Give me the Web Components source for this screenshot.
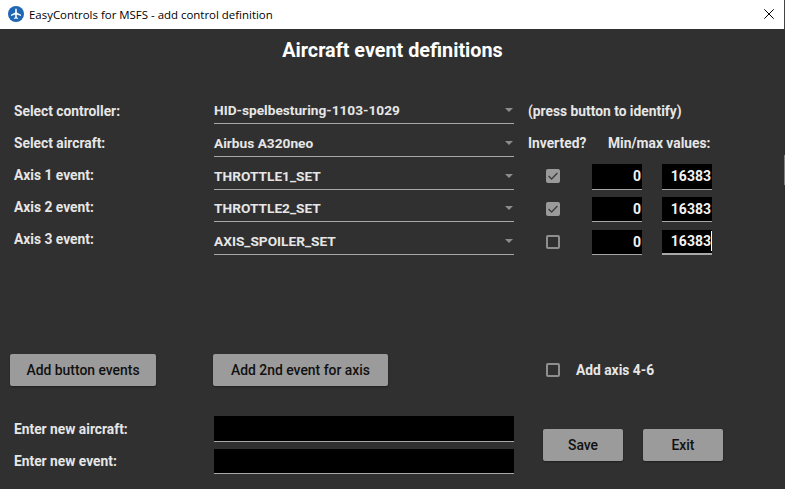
<!DOCTYPE html>
<html>
<head>
<meta charset="utf-8">
<title>EasyControls for MSFS</title>
<style>
    html, body { margin: 0; height: 100%; overflow: hidden; background: #303030; }
    body { font-family: Roboto, "Liberation Sans", sans-serif; }
</style>
</head>
<body>
<ec-app></ec-app>
<script>
class EcTitlebar extends HTMLElement {
    constructor() {
        super();
        this.attachShadow({ mode: 'open' }).innerHTML = `
            <style>
                :host { display: flex; align-items: center; height: 29px; background: #fff; color: #000; box-sizing: border-box; border-right: 1px solid #444; }
                .logo { margin-left: 8px; margin-top: -1px; width: 16px; height: 16px; flex: none; }
                .text { margin-left: 5px; font: 11.45px/16px "Open Sans", "Noto Sans", sans-serif; white-space: nowrap; }
                .close { margin-left: auto; margin-right: 10px; width: 10px; height: 10px; flex: none; margin-top: -1px; }
            </style>
            <svg class="logo" viewBox="0 0 16 16">
                <circle cx="8" cy="8" r="8" fill="#1f66b5"/>
                <path fill="#fff" d="M8 2.6c.5 0 .8.7.8 1.6v2.2l4.2 2.4v1.1L8.8 8.6v2.6l1.3 1v.8L8 12.4l-2.1.6v-.8l1.3-1V8.6L3 9.9V8.8l4.2-2.4V4.2c0-.9.3-1.6.8-1.6z"/>
            </svg>
            <span class="text"><slot></slot></span>
            <svg class="close" viewBox="0 0 10 10"><path d="M.3.3l9.4 9.4M9.7.3L.3 9.7" stroke="#000" stroke-width="1" fill="none"/></svg>
        `;
    }
}

class EcSelect extends HTMLElement {
    constructor() {
        super();
        this.attachShadow({ mode: 'open' }).innerHTML = `
            <style>
                :host { display: flex; align-items: center; height: 30px; box-sizing: border-box; padding-top: 3px; border-bottom: 1px solid #a8a8a8; color: #e6e6e6; font-weight: 700; font-size: 13.7px; white-space: nowrap; }
                .value { flex: 1; }
                .arrow { width: 0; height: 0; margin-right: 1px; border-left: 4px solid transparent; border-right: 4px solid transparent; border-top: 4px solid #8c8c8c; }
            </style>
            <span class="value"><slot></slot></span><span class="arrow"></span>
        `;
    }
}

class EcCheck extends HTMLElement {
    constructor() {
        super();
        this.attachShadow({ mode: 'open' }).innerHTML = `
            <style>
                :host { display: block; width: 14px; height: 14px; box-sizing: border-box; border: 2px solid #8e8e8e; border-radius: 2px; }
                :host([checked]) { background: #9a9a9a; border-color: #9a9a9a; }
                svg { display: none; width: 10px; height: 10px; }
                :host([checked]) svg { display: block; }
            </style>
            <svg viewBox="0 0 10 10"><path d="M.6 5l3 3 5.8-6" stroke="#3a3a3a" stroke-width="1.3" fill="none"/></svg>
        `;
    }
}

class EcField extends HTMLElement {
    constructor() {
        super();
        this.attachShadow({ mode: 'open' }).innerHTML = `
            <style>
                :host { display: flex; align-items: center; justify-content: flex-end; height: 25.5px; box-sizing: border-box; background: #000; border-bottom: 1px solid #a8a8a8; color: #f2f2f2; font-weight: 700; font-size: 14px; }
                :host([focused]) { border-bottom: 2px solid #a8a8a8; }
                .val { display: inline-flex; align-items: center; margin-right: 1px; }
                :host([focused]) .val { border-right: 1px solid #fff; line-height: 20px; margin-right: 0; }
            </style>
            <span class="val"><slot></slot></span>
        `;
    }
}

class EcButton extends HTMLElement {
    constructor() {
        super();
        this.attachShadow({ mode: 'open' }).innerHTML = `
            <style>
                :host { display: flex; align-items: center; justify-content: center; height: 32px; box-sizing: border-box; background: #9b9b9b; color: #111; border-radius: 2px; font-weight: 500; font-size: 13.9px; box-shadow: 0 1px 2px rgba(0,0,0,.35); white-space: nowrap; }
            </style>
            <slot></slot>
        `;
    }
}

class EcApp extends HTMLElement {
    constructor() {
        super();
        this.attachShadow({ mode: 'open' }).innerHTML = `
            <style>
                :host { display: block; position: relative; height: 489px; background: #303030; color: #e6e6e6; overflow: hidden; }
                /* resize sliver on the window's right edge */
                .edge { position: absolute; right: 0; top: 155px; width: 1px; height: 30px; background: #808080; }
                h1 { margin: 0; height: 65px; box-sizing: border-box; padding-top: 10px; text-align: center; font-size: 19.8px; line-height: 24px; font-weight: 700; color: #fff; }
                .lbl { font-weight: 700; font-size: 13.8px; line-height: 32px; height: 32px; white-space: nowrap; }
                .top { display: flex; height: 260px; }
                .labels { width: 200px; margin-left: 14px; padding-top: 1px; }
                .grid { display: grid; grid-template-columns: 300px 14px 64px 50px 20px 50px; grid-auto-rows: 30px; row-gap: 2.75px; align-items: end; }
                .sel { grid-column: 1; }
                .note, .hdr { font-weight: 700; font-size: 13.8px; height: 30px; white-space: nowrap; }
                .note { grid-column: 3 / span 4; line-height: 34px; }
                .hdr { line-height: 32px; }
                .inv { grid-column: 3; }
                .mm { grid-column: 4 / span 3; padding-left: 16px; }
                ec-check { grid-column: 3; margin-left: 18px; align-self: center; margin-top: 3px; }
                .min { grid-column: 4; }
                .max { grid-column: 6; }
                .actions { display: flex; align-items: center; padding-left: 10px; }
                .b1 { width: 146px; }
                .b2 { width: 175px; margin-left: 57px; }
                .actions ec-check { margin: 0 0 0 158px; }
                .actions .lbl { margin-left: 16px; }
                .bottom { display: flex; margin-top: 30px; }
                .labels2 { width: 200px; margin-left: 14px; margin-top: -3px; }
                .inputs { width: 300px; display: flex; flex-direction: column; gap: 7px; }
                .btns { display: flex; gap: 20px; margin: 13px 0 0 29px; }
                .btns ec-button { width: 80px; }
            </style>
            <ec-titlebar>EasyControls for MSFS - add control definition</ec-titlebar>
            <h1>Aircraft event definitions</h1>
            <div class="top">
                <div class="labels">
                    <div class="lbl">Select controller:</div>
                    <div class="lbl">Select aircraft:</div>
                    <div class="lbl">Axis 1 event:</div>
                    <div class="lbl">Axis 2 event:</div>
                    <div class="lbl">Axis 3 event:</div>
                </div>
                <div class="grid">
                    <ec-select class="sel">HID-spelbesturing-1103-1029</ec-select>
                    <div class="note">(press button to identify)</div>

                    <ec-select class="sel">Airbus A320neo</ec-select>
                    <div class="hdr inv">Inverted?</div>
                    <div class="hdr mm">Min/max values:</div>

                    <ec-select class="sel">THROTTLE1_SET</ec-select>
                    <ec-check checked></ec-check>
                    <ec-field class="min">0</ec-field>
                    <ec-field class="max">16383</ec-field>

                    <ec-select class="sel">THROTTLE2_SET</ec-select>
                    <ec-check checked></ec-check>
                    <ec-field class="min">0</ec-field>
                    <ec-field class="max">16383</ec-field>

                    <ec-select class="sel">AXIS_SPOILER_SET</ec-select>
                    <ec-check></ec-check>
                    <ec-field class="min">0</ec-field>
                    <ec-field class="max" focused>16383</ec-field>
                </div>
            </div>
            <div class="actions">
                <ec-button class="b1">Add button events</ec-button>
                <ec-button class="b2">Add 2nd event for axis</ec-button>
                <ec-check></ec-check>
                <div class="lbl">Add axis 4-6</div>
            </div>
            <div class="bottom">
                <div class="labels2">
                    <div class="lbl">Enter new aircraft:</div>
                    <div class="lbl">Enter new event:</div>
                </div>
                <div class="inputs">
                    <ec-field></ec-field>
                    <ec-field></ec-field>
                </div>
                <div class="btns">
                    <ec-button>Save</ec-button>
                    <ec-button>Exit</ec-button>
                </div>
            </div>
            <div class="edge"></div>
        `;
    }
}

customElements.define('ec-titlebar', EcTitlebar);
customElements.define('ec-select', EcSelect);
customElements.define('ec-check', EcCheck);
customElements.define('ec-field', EcField);
customElements.define('ec-button', EcButton);
customElements.define('ec-app', EcApp);
</script>
</body>
</html>
